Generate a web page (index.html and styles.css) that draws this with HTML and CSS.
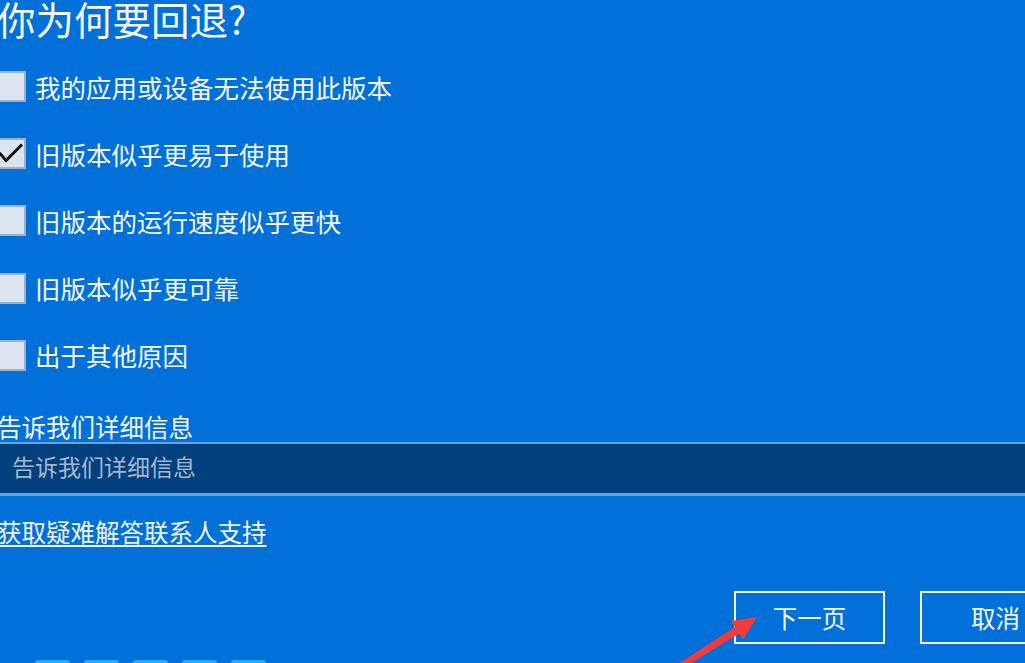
FILE: index.html
```html
<!DOCTYPE html>
<html lang="zh-CN">
<head>
<meta charset="utf-8">
<title>你为何要回退?</title>
<link rel="stylesheet" href="styles.css">
</head>
<body>
<div class="page">
  <h1 class="title">你为何要回退?</h1>
  <ul class="options">
    <li class="option"><span class="box"></span><span class="label">我的应用或设备无法使用此版本</span></li>
    <li class="option"><span class="box checked"><svg viewBox="0 0 31 31" class="tick"><path d="M4.5 15 L11 22.5 L27 6.5" /></svg></span><span class="label">旧版本似乎更易于使用</span></li>
    <li class="option"><span class="box"></span><span class="label">旧版本的运行速度似乎更快</span></li>
    <li class="option"><span class="box"></span><span class="label">旧版本似乎更可靠</span></li>
    <li class="option"><span class="box"></span><span class="label">出于其他原因</span></li>
  </ul>
  <div class="field-label">告诉我们详细信息</div>
  <div class="field"><span class="placeholder">告诉我们详细信息</span></div>
  <a class="link" href="#">获取疑难解答联系人支持</a>
  <div class="actions">
    <button class="btn">下一页</button>
    <button class="btn">取消</button>
  </div>
  <div class="steps">
    <span class="step"></span><span class="step"></span><span class="step"></span><span class="step"></span><span class="step"></span>
  </div>
  <svg class="arrow" viewBox="0 0 100 58" width="100" height="58"><polygon points="87,12 73.1,34.4 69.2,28.5 5.8,67.2 2.2,62.8 64.8,21.9 60.9,16" /></svg>
</div>
</body>
</html>
```
FILE: styles.css
```css
html, body {
  margin: 0;
  padding: 0;
  background: #0170d8;
}
body {
  font-family: "Noto Sans CJK SC", "Noto Sans", sans-serif;
  color: #f4f8fc;
}
.page {
  position: relative;
  width: 1025px;
  height: 663px;
  overflow: hidden;
  background: #0170d8;
}
.title {
  margin: -2px 0 0 -3px;
  font-size: 38.5px;
  line-height: 40px;
  font-weight: 400;
  letter-spacing: 0;
}
.options {
  list-style: none;
  margin: 15px 0 0 0;
  padding: 0;
  display: flex;
  flex-direction: column;
}
.option {
  display: flex;
  align-items: center;
  height: 67.2px;
  gap: 9px;
}
.box {
  flex: none;
  position: relative;
  width: 31px;
  height: 31px;
  margin-left: -5px;
  box-sizing: border-box;
  border: 2px solid #9db1c9;
  background: #dce5ef;
}
.tick {
  position: absolute;
  left: -2px;
  top: -2px;
  width: 31px;
  height: 31px;
}
.tick path {
  fill: none;
  stroke: #111;
  stroke-width: 3;
}
.label {
  font-size: 25.5px;
  line-height: 30px;
}
.field-label {
  margin: 23px 0 0 -3px;
  font-size: 24.5px;
  line-height: 30px;
}
.field {
  margin-top: 0;
  height: 49px;
  border-top: 2px solid #5fa5e8;
  border-bottom: 3px solid #5fa5e8;
  background: #023f7d;
  display: flex;
  align-items: center;
  padding-left: 12px;
}
.placeholder {
  font-size: 23px;
  line-height: 28px;
  color: #a3b9d2;
  margin-top: -4px;
}
.link {
  display: inline-block;
  margin: 21px 0 0 -3px;
  font-size: 24.5px;
  line-height: 30px;
  color: #f0f6fc;
  text-decoration: underline;
  text-underline-offset: 3px;
  text-decoration-thickness: 1.5px;
}
.actions {
  display: flex;
  gap: 35px;
  padding-left: 734px;
  margin-top: 44px;
}
.btn {
  flex: none;
  width: 151px;
  height: 53px;
  box-sizing: border-box;
  border: 2.5px solid #f2f7fc;
  background: transparent;
  color: #f4f8fc;
  font-family: "Noto Sans CJK SC", "Noto Sans", sans-serif;
  font-size: 24.5px;
  padding: 0;
}
.steps {
  display: flex;
  gap: 14px;
  padding-left: 35px;
  margin-top: 16px;
}
.step {
  width: 35px;
  height: 10px;
  border-radius: 3px 3px 0 0;
  background: #1eb0f4;
}
.arrow {
  position: absolute;
  left: 670px;
  top: 605px;
  overflow: visible;
}
.arrow polygon {
  fill: #f43b3b;
}
```
